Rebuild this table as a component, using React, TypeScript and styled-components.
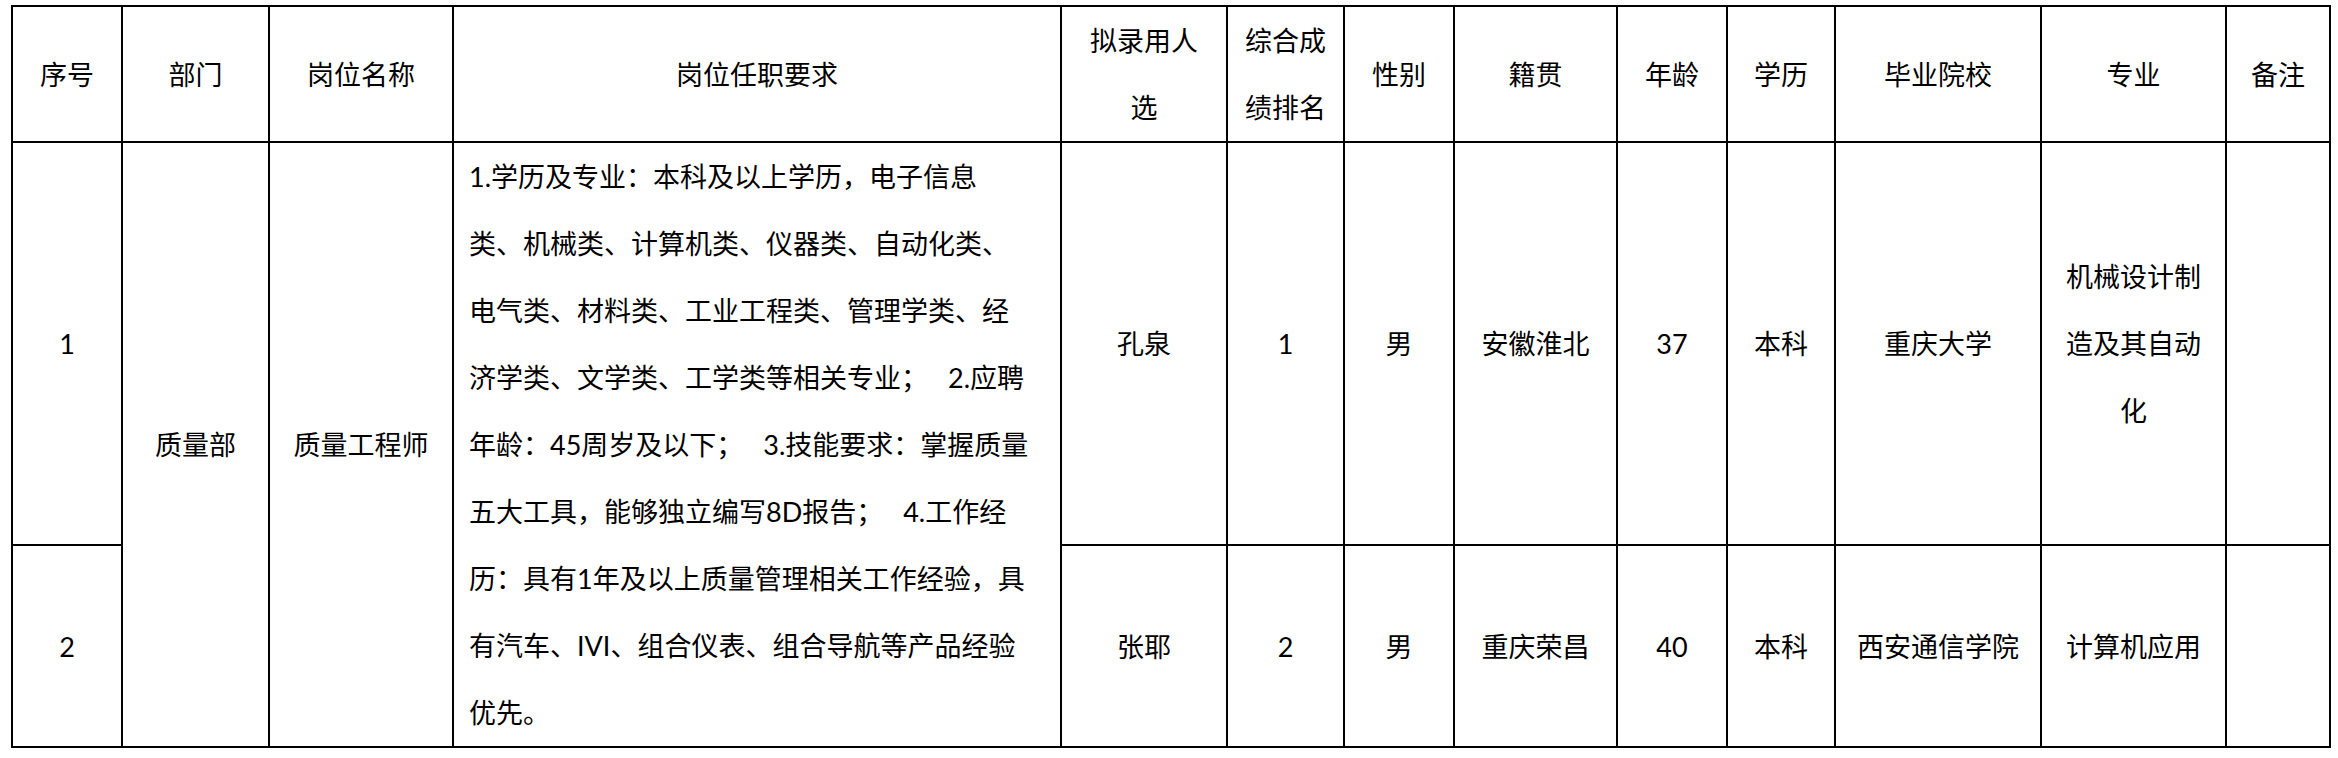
import React from "react";
import styled, { createGlobalStyle } from "styled-components";

const GlobalStyle = createGlobalStyle`
  html, body {
    margin: 0;
    padding: 0;
    background: #fff;
  }
  body {
    font-family: Lato, "Noto Sans CJK SC", sans-serif;
    color: #000;
  }
`;

const Page = styled.div`
  padding: 5px 0 0 11px;
`;

const Sheet = styled.div`
  display: grid;
  grid-template-columns: 110px 147px 184px 608px 166px 117px 110px 163px 110px 108px 206px 185px 104px;
  grid-template-rows: 136px 403px 202px;
  width: max-content;
  border-top: 2px solid #000;
  border-left: 2px solid #000;
  font-size: 27px;
  line-height: 67px;
`;

const Cell = styled.div<{ $rows?: number }>`
  box-sizing: border-box;
  grid-row: span ${(p) => p.$rows ?? 1};
  border-right: 2px solid #000;
  border-bottom: 2px solid #000;
  display: flex;
  align-items: center;
  justify-content: center;
  text-align: center;
  white-space: nowrap;
  overflow: hidden;
`;

const TextCell = styled(Cell)`
  align-items: flex-start;
  justify-content: flex-start;
  text-align: left;
  padding: 0 0 0 15px;
`;

const Line = styled.div`
  white-space: nowrap;
`;

const Spacer = styled.span`
  display: inline-block;
  width: 20px;
`;

type Person = {
  no: string;
  name: string;
  rank: string;
  sex: string;
  origin: string;
  age: string;
  edu: string;
  school: string;
  major: string[];
};

const headers: string[][] = [
  ["序号"],
  ["部门"],
  ["岗位名称"],
  ["岗位任职要求"],
  ["拟录用人", "选"],
  ["综合成", "绩排名"],
  ["性别"],
  ["籍贯"],
  ["年龄"],
  ["学历"],
  ["毕业院校"],
  ["专业"],
  ["备注"],
];

const requirement: string[][] = [
  ["1.学历及专业：本科及以上学历，电子信息"],
  ["类、机械类、计算机类、仪器类、自动化类、"],
  ["电气类、材料类、工业工程类、管理学类、经"],
  ["济学类、文学类、工学类等相关专业；", "2.应聘"],
  ["年龄：45周岁及以下；", "3.技能要求：掌握质量"],
  ["五大工具，能够独立编写8D报告；", "4.工作经"],
  ["历：具有1年及以上质量管理相关工作经验，具"],
  ["有汽车、IVI、组合仪表、组合导航等产品经验"],
  ["优先。"],
];

const people: Person[] = [
  {
    no: "1",
    name: "孔泉",
    rank: "1",
    sex: "男",
    origin: "安徽淮北",
    age: "37",
    edu: "本科",
    school: "重庆大学",
    major: ["机械设计制", "造及其自动", "化"],
  },
  {
    no: "2",
    name: "张耶",
    rank: "2",
    sex: "男",
    origin: "重庆荣昌",
    age: "40",
    edu: "本科",
    school: "西安通信学院",
    major: ["计算机应用"],
  },
];

const Lines: React.FC<{ lines: string[] }> = ({ lines }) => (
  <div>
    {lines.map((l, i) => (
      <Line key={i}>{l}</Line>
    ))}
  </div>
);

const PersonCells: React.FC<{ p: Person }> = ({ p }) => (
  <>
    <Cell>{p.name}</Cell>
    <Cell>{p.rank}</Cell>
    <Cell>{p.sex}</Cell>
    <Cell>{p.origin}</Cell>
    <Cell>{p.age}</Cell>
    <Cell>{p.edu}</Cell>
    <Cell>{p.school}</Cell>
    <Cell>
      <Lines lines={p.major} />
    </Cell>
    <Cell />
  </>
);

const App: React.FC = () => {
  const [first, second] = people;
  return (
    <>
      <GlobalStyle />
      <Page>
        <Sheet>
          {headers.map((h, i) => (
            <Cell key={i}>
              <Lines lines={h} />
            </Cell>
          ))}

          <Cell>{first.no}</Cell>
          <Cell $rows={2}>质量部</Cell>
          <Cell $rows={2}>质量工程师</Cell>
          <TextCell $rows={2}>
            <div>
              {requirement.map((parts, i) => (
                <Line key={i}>
                  {parts.map((part, j) => (
                    <React.Fragment key={j}>
                      {j > 0 && <Spacer />}
                      {part}
                    </React.Fragment>
                  ))}
                </Line>
              ))}
            </div>
          </TextCell>
          <PersonCells p={first} />

          <Cell>{second.no}</Cell>
          <PersonCells p={second} />
        </Sheet>
      </Page>
    </>
  );
};

export default App;
